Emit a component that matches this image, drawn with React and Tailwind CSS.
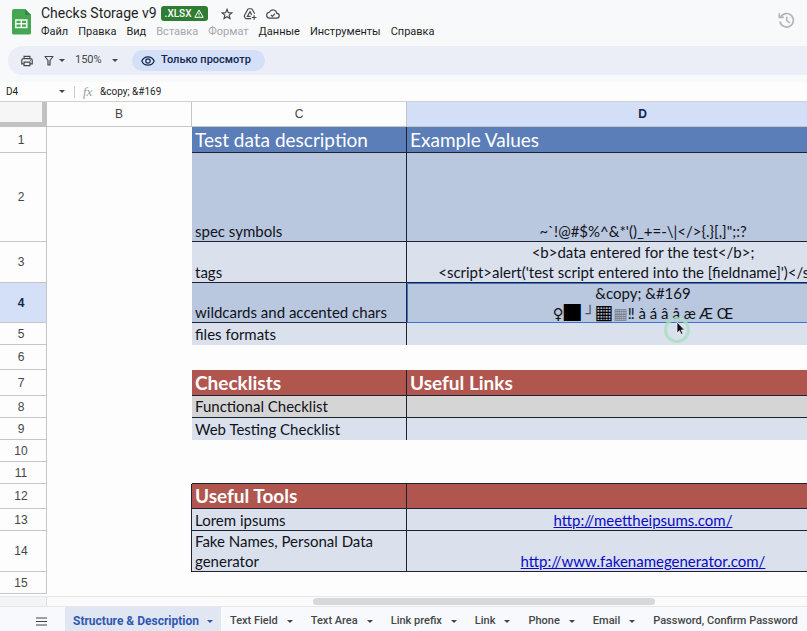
import React from 'react'
import {clsx} from 'clsx'

const menus = [
  {label: 'Файл'},
  {label: 'Правка'},
  {label: 'Вид'},
  {label: 'Вставка', disabled: true},
  {label: 'Формат', disabled: true},
  {label: 'Данные'},
  {label: 'Инструменты'},
  {label: 'Справка'},
]

const tabs = ['Text Field', 'Text Area', 'Link prefix', 'Link', 'Phone', 'Email', 'Password, Confirm Password']

const line = 'border-[#1c2230]'
const blue = 'bg-[#b9c7df]'
const pale = 'bg-[#dae1ed]'
const red = 'bg-[#b0564f] text-white font-bold text-[19px] leading-[24px]'

const rows = [
  {
    height: 'h-[26px]',
    style: 'bg-[#5b7db8] text-white text-[19px] leading-[24px]',
    c: 'Test data description',
    d: 'Example Values',
    heading: true,
  },
  {height: 'h-[89px]', style: blue, c: 'spec symbols', d: '~`!@#$%^&*\'()_+=-\\|</>{.}[,]";:?'},
  {
    height: 'h-[41px]',
    style: pale,
    c: 'tags',
    d: (
      <>
        {'<b>data entered for the test</b>;'}
        <br />
        {"<script>alert('test script entered into the [fieldname]')</script>"}
      </>
    ),
  },
  {height: 'h-[40px]', style: blue, c: 'wildcards and accented chars', d: <Wildcards />, selected: true},
  {height: 'h-[22px]', style: `${pale} pb-px`, c: 'files formats', open: true},
  {height: 'h-[25px]'},
  {height: 'h-[26px]', style: red, c: 'Checklists', d: 'Useful Links', heading: true},
  {height: 'h-[22px]', style: 'bg-[#d6d5d5] pb-px', c: 'Functional Checklist'},
  {height: 'h-[22px]', style: `${pale} pb-px`, c: 'Web Testing Checklist', open: true},
  {height: 'h-[22px]'},
  {height: 'h-[22px]', ruled: true},
  {height: 'h-[25px]', style: red, c: 'Useful Tools', heading: true, boxed: true},
  {height: 'h-[22px]', style: pale, c: 'Lorem ipsums', d: <Url href="http://meettheipsums.com/" />, boxed: true},
  {
    height: 'h-[41px]',
    style: pale,
    c: 'Fake Names, Personal Data generator',
    d: <Url href="http://www.fakenamegenerator.com/" />,
    boxed: true,
  },
  {height: 'h-[22px]'},
]

function Url({href}) {
  return <a href={href} className="text-[#0a0ac4] underline">{href}</a>
}

function Wildcards() {
  return (
    <>
      &amp;copy; &amp;#169
      <br />
      <span className="font-['DejaVu_Sans'] leading-none">♀</span>
      <span className="font-['Noto_Sans_CJK_JP'] text-[17px] leading-3 text-black">█</span>
      <span className="font-['DejaVu_Sans'] leading-none text-[#4a5264]"> ┘</span>
      <span className="font-['DejaVu_Sans'] text-[20px] leading-3 font-bold text-black">▦</span>
      <span className="font-['DejaVu_Sans'] leading-none text-[#777f8e]">▦</span>
      ‼ à á â å æ Æ Œ
    </>
  )
}

function Caret({className}) {
  return (
    <svg viewBox="0 0 6 3" className={clsx('w-[6px] h-[3px] shrink-0 pointer-events-none', className)} fill="currentColor">
      <path d="M0 0h6L3 3z" />
    </svg>
  )
}

function SheetsLogo() {
  return (
    <svg viewBox="0 0 20 26" className="w-5 h-[26px] shrink-0">
      <path d="M2 0h11l6 6v18a1.500 1.500 0 0 1-1.500 1.500H1.500A1.500 1.500 0 0 1 0 24V2a2 2 0 0 1 2-2z" fill="#45a551" />
      <path d="M13 0l6 6h-5a1 1 0 0 1-1-1z" fill="#2f8a43" />
      <path d="M3.800 11h11v7.500h-11zM3.800 14.700h11M9.300 11v7.500" fill="none" stroke="#f1fbf2" strokeWidth="1.500" />
    </svg>
  )
}

function StarIcon() {
  return (
    <svg viewBox="0 0 24 24" className="size-[14px]" fill="none" stroke="currentColor" strokeWidth="2">
      <path d="M12 4l2.300 5.600 6 .5-4.600 3.900 1.400 5.900-5.100-3.100-5.100 3.100 1.400-5.900-4.600-3.900 6-.5z" />
    </svg>
  )
}

function DriveIcon() {
  return (
    <svg viewBox="0 0 24 24" className="size-[14px]" fill="none" stroke="currentColor" strokeWidth="2">
      <path d="M14 20H5.500a2 2 0 0 1-1.700-1L2.500 16.500a2 2 0 0 1 0-2L8.300 4a2 2 0 0 1 1.700-1h4a2 2 0 0 1 1.700 1L20 11.500" />
      <path d="M13 16H7.500L12 8l3 5.500M19 14v8M15 18h8" />
    </svg>
  )
}

function CloudIcon() {
  return (
    <svg viewBox="0 0 24 24" className="size-[14px]" fill="none" stroke="currentColor" strokeWidth="2">
      <path d="M6.500 19a5 5 0 0 1-.7-10A6.800 6.800 0 0 1 18.700 11a4 4 0 0 1 0 8z" />
      <path d="M8.500 13.500l2.500 2.500 4.500-4.500" />
    </svg>
  )
}

function HistoryIcon() {
  return (
    <svg viewBox="0 0 24 24" className="size-[18px]" fill="none" stroke="currentColor" strokeWidth="2.200">
      <path d="M5 8a9 9 0 1 1-1 6M3 3v5.500h6M13 7.500v5l4 3.500" />
    </svg>
  )
}

function PrintIcon() {
  return (
    <svg viewBox="0 0 24 24" className="size-[14px]" fill="none" stroke="currentColor" strokeWidth="2">
      <path d="M7 8V4h10v4M7 17H3v-6a3 3 0 0 1 3-3h12a3 3 0 0 1 3 3v6h-4M7 14h10v6H7z" />
      <path d="M17 11h1.500" />
    </svg>
  )
}

function FilterIcon() {
  return (
    <svg viewBox="0 0 10 11" className="w-[10px] h-[11px]" fill="none" stroke="currentColor" strokeWidth="1.200">
      <path d="M1 1.500h8L6 5.500V10H4V5.500z" strokeLinejoin="round" />
    </svg>
  )
}

function EyeIcon() {
  return (
    <svg viewBox="0 0 14 10" className="w-[14px] h-[10px]" fill="none" stroke="currentColor" strokeWidth="1.200">
      <path d="M.8 5C2 2.300 4.300.8 7 .8S12 2.300 13.200 5C12 7.700 9.700 9.200 7 9.200S2 7.700.8 5z" />
      <circle cx="7" cy="5" r="2.200" />
    </svg>
  )
}

function WarningIcon() {
  return (
    <svg viewBox="0 0 10 9" className="w-[10px] h-[9px]" fill="none" stroke="currentColor" strokeWidth="1">
      <path d="M5 1l4.200 7.300H.8zM5 3.500v2.300M5 6.500v.9" />
    </svg>
  )
}

function Header() {
  return (
    <header className="flex items-start gap-2 h-[46px] shrink-0 pl-3 pr-3">
      <div className="pt-[9px]"><SheetsLogo /></div>
      <div className="flex-1 pt-[5px] pl-px">
        <div className="flex items-center h-[17px]">
          <h1 className="text-[14px] text-[#1f1f1f] whitespace-nowrap">Checks Storage v9</h1>
          <span className="flex items-center gap-[3px] ml-1 h-[15px] px-1 rounded-[3px] bg-[#2e7d32] text-white text-[10px] font-medium">
            .XLSX <WarningIcon />
          </span>
          <div className="flex items-center gap-[9px] ml-3 text-[#444746]">
            <button aria-label="Star"><StarIcon /></button>
            <button aria-label="Add to Drive"><DriveIcon /></button>
            <button aria-label="Saved"><CloudIcon /></button>
          </div>
        </div>
        <nav className="flex gap-[10px] pt-[2px] text-[11px] leading-4 text-[#1f1f1f]">
          {menus.map((menu) => (
            <button key={menu.label} disabled={menu.disabled} className="disabled:text-[#a6a8aa]">
              {menu.label}
            </button>
          ))}
        </nav>
      </div>
      <button aria-label="History" className="pt-[11px] text-[#b3b5b7]"><HistoryIcon /></button>
    </header>
  )
}

function Toolbar() {
  return (
    <div className="flex items-center h-[29px] shrink-0 ml-2 pl-3 mb-[7px] rounded-l-full bg-[#ebeef6] text-[#444746]">
      <button aria-label="Print"><PrintIcon /></button>
      <button aria-label="Filter" className="flex items-center gap-[5px] ml-[10px]"><FilterIcon /><Caret /></button>
      <div className="relative flex items-center ml-[10px]">
        <select aria-label="Zoom" className="appearance-none bg-transparent w-[43px] text-[11px]">
          <option>150%</option>
        </select>
        <Caret className="absolute right-0" />
      </div>
      <button className="flex items-center gap-[6px] ml-[14px] h-[21px] pl-[9px] pr-[14px] rounded-full bg-[#d3e0f8] text-[#14264d] text-[11px] font-medium">
        <EyeIcon />
        Только просмотр
      </button>
    </div>
  )
}

function FormulaBar() {
  return (
    <div className="flex items-center h-[20px] shrink-0 bg-[#fdfdfe] border-b border-[#cfd1d4] text-[10px] text-[#1f1f1f]">
      <div className="relative flex items-center w-[74px] pl-[6px]">
        <input aria-label="Name box" defaultValue="D4" className="w-12 bg-transparent" />
        <Caret className="absolute right-[9px] text-[#444746]" />
      </div>
      <div className="h-3 border-l border-[#c7c9cc]" />
      <span className="ml-2 w-[17px] font-['Liberation_Serif'] italic text-[13px] leading-4 text-[#9a9c9e]">fx</span>
      <input aria-label="Formula" defaultValue={'&copy; &#169'} className="flex-1 bg-transparent" />
    </div>
  )
}

function RowNumber({n, selected}) {
  return (
    <th
      scope="row"
      className={clsx(
        'border-b border-r border-[#c4c6c8] pr-1 align-middle text-[12px] leading-4',
        "font-['Liberation_Sans']",
        selected ? 'bg-[#d3e0f8] font-bold text-[#14264d]' : 'font-normal text-[#444746]'
      )}
    >
      {n}
    </th>
  )
}

function Grid() {
  return (
    <table className="table-fixed border-separate border-spacing-0 w-[879px] text-[15px] leading-[20px] text-[#10131a]">
      <colgroup>
        <col className="w-[47px]" />
        <col className="w-[145px]" />
        <col className="w-[215px]" />
        <col className="w-[472px]" />
      </colgroup>
      <thead>
        <tr className="h-[25px] font-['Liberation_Sans'] text-[12px] leading-4 text-[#444746]">
          <td className="bg-[#f6f6f6] border-r-5 border-b-5 border-[#c2c2c2]" />
          <th scope="col" className="border-b border-r border-[#c4c6c8] font-normal">B</th>
          <th scope="col" className="border-b border-r border-[#c4c6c8] font-normal">C</th>
          <th scope="col" className="border-b border-r border-[#c4c6c8] bg-[#d3dff7] text-[#14264d] font-bold">D</th>
        </tr>
      </thead>
      <tbody>
        {rows.map((row, i) => {
          const ruled = (row.c && !row.open) || row.ruled
          return (
            <tr key={i} className={row.height}>
              <RowNumber n={i + 1} selected={row.selected} />
              <td className={clsx(row.boxed && 'border-r', line)} />
              <td className={clsx('pl-[3px] align-bottom', row.style, line, row.c && 'border-r', ruled && 'border-b')}>
                {row.c}
              </td>
              <td
                className={clsx(
                  'align-bottom whitespace-nowrap',
                  row.heading ? 'pl-[3px]' : 'text-center',
                  row.style,
                  line,
                  ruled && !row.selected && 'border-b',
                  row.selected && 'shadow-[inset_0_0_0_1px_#3b74d8]'
                )}
              >
                {row.d}
              </td>
            </tr>
          )
        })}
      </tbody>
    </table>
  )
}

function Pointer() {
  return (
    <svg viewBox="0 0 28 28" className="absolute left-[663px] top-[213px] size-7 pointer-events-none">
      <circle cx="14" cy="15" r="11.500" fill="none" stroke="#a9e0bf" strokeWidth="3" opacity="0.800" />
      <path d="M14 7v11l2.500-2.300 1.700 3.600 1.700-.8-1.700-3.500h3.300z" fill="#111" stroke="#f4f4f4" strokeWidth="0.700" />
    </svg>
  )
}

function SheetTabs() {
  return (
    <footer className="flex items-stretch h-6 shrink-0 bg-[#f8f9fc] text-[#444746] whitespace-nowrap overflow-hidden">
      <button aria-label="All sheets" className="pl-9 pr-[18px] pt-1">
        <svg viewBox="0 0 11 9" className="w-[11px] h-[9px]" stroke="currentColor" strokeWidth="1.200">
          <path d="M0 1h11M0 4.500h11M0 8h11" />
        </svg>
      </button>
      <button className="flex items-center gap-2 px-2 pt-1 bg-[#e0e7f3] text-[12px] text-[#3258b0] font-bold">
        Structure &amp; Description
        <Caret />
      </button>
      {tabs.map((tab) => (
        <button key={tab} className="flex items-center gap-[9px] px-[9px] pt-1 text-[11px] font-medium">
          {tab}
          <Caret />
        </button>
      ))}
    </footer>
  )
}

export default function App() {
  return (
    <div className="flex flex-col h-screen overflow-hidden bg-[#f8f9fb] font-[Roboto,sans-serif]">
      <Header />
      <Toolbar />
      <FormulaBar />
      <main className="relative flex-1 min-h-0 overflow-hidden bg-[#fdfdfe] font-[Lato,sans-serif]">
        <Grid />
        <Pointer />
      </main>
      <div className="flex h-[11px] shrink-0 border-y border-[#e6e7e9] bg-[#fbfbfc]">
        <div className="w-[47px] bg-[#f3f4f5] border-r border-[#dcdde0]" />
        <div className="flex-1 py-px">
          <div className="ml-[35%] w-[45%] h-[7px] rounded-full bg-[#d7d8da]" />
        </div>
      </div>
      <SheetTabs />
    </div>
  )
}
